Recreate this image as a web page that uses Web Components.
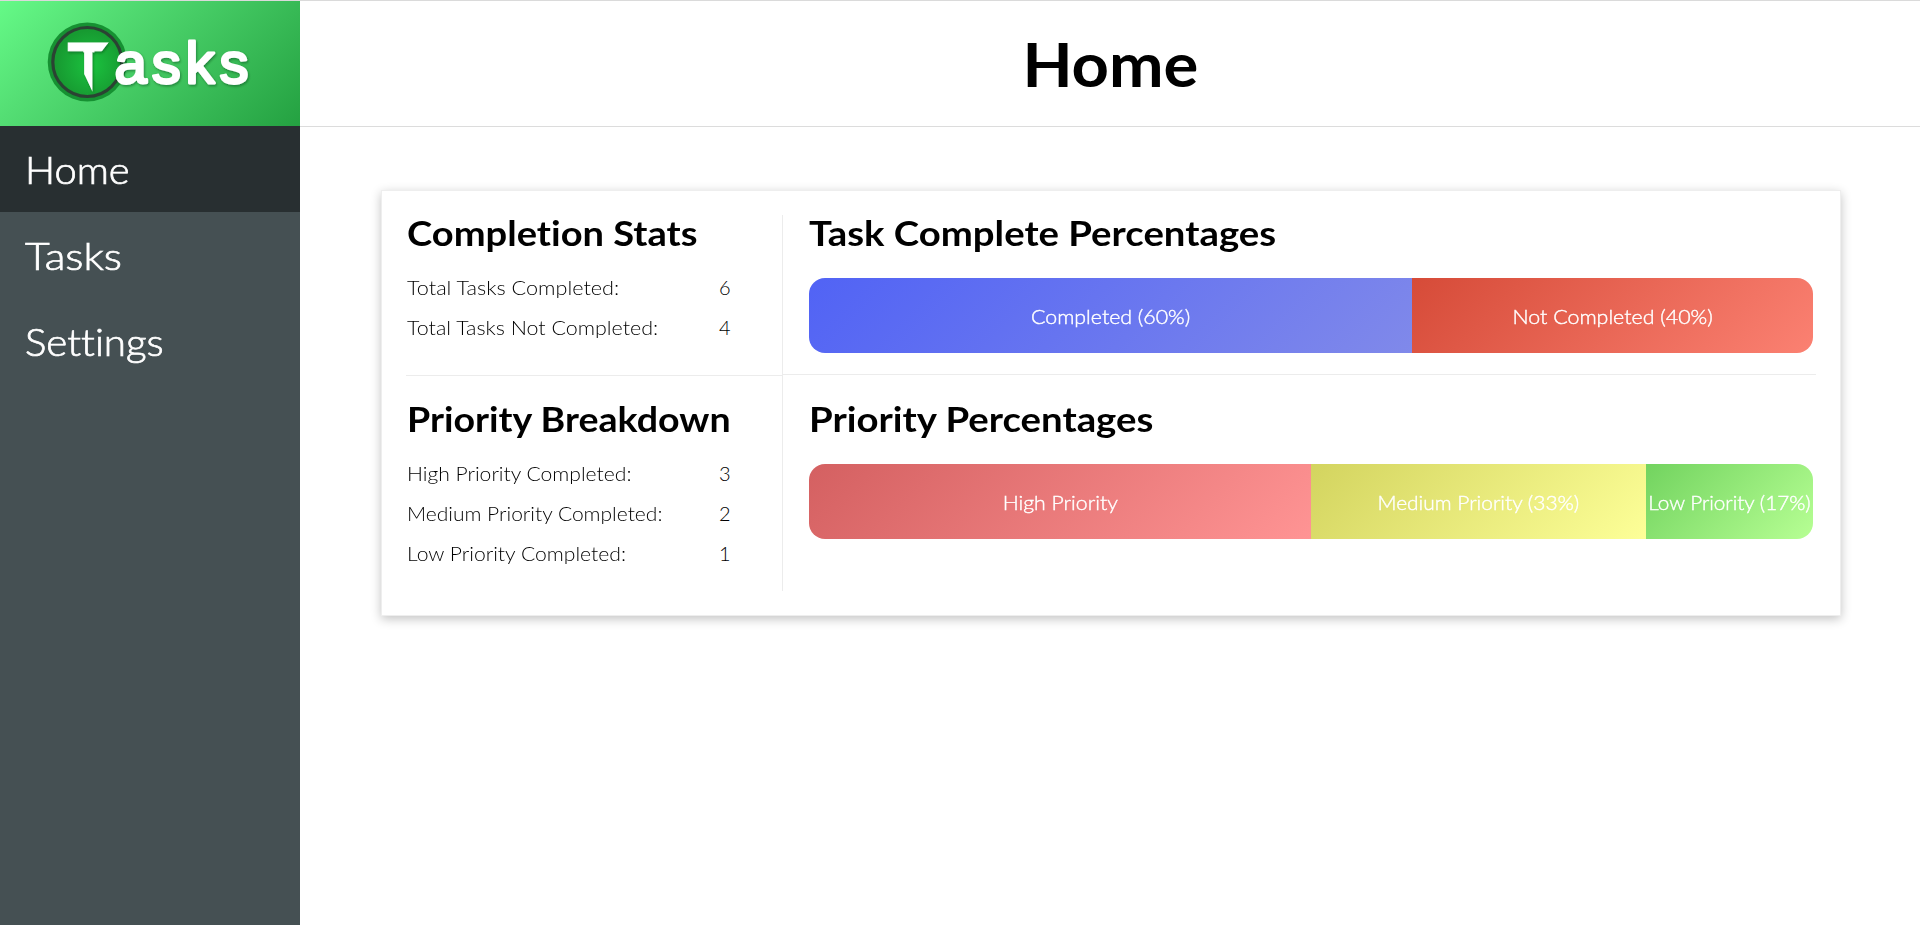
<!DOCTYPE html>
<html lang="en">
<head>
<meta charset="utf-8">
<title>Tasks</title>
<style>
  html, body { margin: 0; height: 100%; overflow: hidden; background: #fff; }
  body { font-family: Lato, "Open Sans", sans-serif; font-variant-ligatures: none; color: #000; }
</style>
</head>
<body>
<tasks-app></tasks-app>
<script>
const define = (name, html, setup) => customElements.define(name, class extends HTMLElement {
  connectedCallback() {
    if (this.shadowRoot) return;
    const t = document.createElement('template');
    t.innerHTML = html;
    this.attachShadow({ mode: 'open' }).append(t.content.cloneNode(true));
    if (setup) setup(this, this.shadowRoot);
  }
});

/* A single line of text, stretched horizontally to the ink width in "ink". */
const pen = document.createElement('canvas').getContext('2d');
define('wide-text', `
  <style>
    :host { display: inline-block; white-space: nowrap; transform-origin: var(--origin, left) center; }
  </style><slot></slot>`, host => {
  const cs = getComputedStyle(host);
  pen.font = `${cs.fontWeight} ${cs.fontSize} ${cs.fontFamily}`;
  const m = pen.measureText(host.textContent);
  const ink = m.actualBoundingBoxLeft + m.actualBoundingBoxRight;
  host.style.transform = `scaleX(${(host.getAttribute('ink') / ink).toFixed(4)})`;
});

define('tasks-logo', `
  <style>
    :host { display: block; height: 125px; background: linear-gradient(135deg, #65fa87 0%, #54de74 28%, #24a141 100%); }
    svg { display: block; }
  </style>
  <svg width="300" height="125" viewBox="0 1 300 125">
    <defs>
      <radialGradient id="disc" cx=".55" cy=".54" r=".5">
        <stop offset="0" stop-color="#1bc33f"/><stop offset="1" stop-color="#179a31"/>
      </radialGradient>
      <clipPath id="cut"><path d="M60 40H110.500L101 52.300H92.400V91.500L84.200 74V52.300H60Z"/></clipPath>
      <filter id="soft" x="-20%" y="-20%" width="140%" height="150%">
        <feDropShadow dx="1" dy="1.500" stdDeviation="1.200" flood-color="#063d14" flood-opacity=".45"/>
      </filter>
    </defs>
    <circle cx="87.300" cy="62" r="39.600" fill="#169132"/>
    <circle cx="87.300" cy="62" r="34.500" fill="url(#disc)" stroke="#2b4233" stroke-width="3.200"/>
    <g filter="url(#soft)" fill="#fff" font-family="Liberation Sans, Arial, sans-serif">
      <g clip-path="url(#cut)"><text x="67.500" y="91.500" font-size="70" font-weight="700" stroke="#fff" stroke-width="1">T</text></g>
      <text x="114.500" y="83" font-size="58" textLength="134" lengthAdjust="spacing" stroke="#fff" stroke-width="2.800" stroke-linejoin="round">asks</text>
    </g>
  </svg>`);

define('nav-item', `
  <style>
    :host { display: flex; align-items: center; height: 86px; box-sizing: border-box; padding: 1px 25px 0; font-size: 37px; font-weight: 300; color: #fff; -webkit-text-stroke: .7px #fff; }
    :host([active]) { background: #282f31; }
  </style><slot></slot>`);

define('side-bar', `
  <style>
    :host { display: block; background: #455053; }
  </style>
  <tasks-logo></tasks-logo>
  <nav>
    <nav-item active><wide-text ink="100">Home</wide-text></nav-item>
    <nav-item><wide-text ink="95">Tasks</wide-text></nav-item>
    <nav-item><wide-text ink="135">Settings</wide-text></nav-item>
  </nav>`);

define('page-header', `
  <style>
    :host { display: flex; height: 126px; box-sizing: border-box; align-items: center; justify-content: center; border-bottom: 1px solid #dcdcdc; --origin: center; }
    h1 { margin: 0; font-size: 61px; line-height: 74px; font-weight: 700; }
  </style>
  <h1><slot></slot></h1>`);

define('stat-row', `
  <style>
    :host { display: grid; grid-template-columns: 312px auto; height: 40px; line-height: 40px; font-size: 20px; font-weight: 300; }
  </style>
  <span><slot></slot></span><span><slot name="value"></slot></span>`);

define('stat-panel', `
  <style>
    :host { display: block; box-sizing: border-box; }
    h2 { margin: 0; height: 52px; font-size: 34px; line-height: 36px; font-weight: 700; }
  </style>
  <h2><slot name="title"></slot></h2><slot></slot>`);

define('bar-part', `
  <style>
    :host { display: flex; align-items: center; justify-content: center; min-width: 0; color: #fff; font-size: 20px; font-weight: 300; -webkit-text-stroke: .4px #fff; --origin: center; }
  </style><slot></slot>`, host => {
  host.style.flex = `${host.getAttribute('share')} 0 0`;
  host.style.background = `linear-gradient(135deg, ${host.getAttribute('from')}, ${host.getAttribute('to')})`;
});

define('ratio-bar', `
  <style>
    :host { display: flex; width: 1004px; height: 75px; border-radius: 16px; overflow: hidden; }
  </style><slot></slot>`);

define('stats-card', `
  <style>
    :host { display: grid; grid-template-columns: 377px 1fr; box-sizing: border-box; width: 1460px; height: 426px; padding: 24px; background: #fff;
      border: 1px solid #eee; box-shadow: 0 3px 10px rgba(0,0,0,.24); }
    .left { border-right: 1px solid #ececec; }
    stat-panel { padding: 0 0 0 1px; }
    .left stat-panel:first-child { height: 161px; border-bottom: 1px solid #ececec; }
    .right stat-panel { padding-left: 26px; }
    .right stat-panel:first-child { height: 160px; border-bottom: 1px solid #ececec; }
    .left stat-panel + stat-panel { padding-top: 25px; }
    .right stat-panel + stat-panel { padding-top: 26px; }
    ratio-bar { margin-top: 11px; }
  </style>
  <div class="left">
    <stat-panel>
      <wide-text slot="title" ink="289">Completion Stats</wide-text>
      <stat-row><wide-text ink="212">Total Tasks Completed:</wide-text><span slot="value">6</span></stat-row>
      <stat-row><wide-text ink="251">Total Tasks Not Completed:</wide-text><span slot="value">4</span></stat-row>
    </stat-panel>
    <stat-panel>
      <wide-text slot="title" ink="321">Priority Breakdown</wide-text>
      <stat-row><wide-text ink="222">High Priority Completed:</wide-text><span slot="value">3</span></stat-row>
      <stat-row><wide-text ink="253">Medium Priority Completed:</wide-text><span slot="value">2</span></stat-row>
      <stat-row><wide-text ink="217">Low Priority Completed:</wide-text><span slot="value">1</span></stat-row>
    </stat-panel>
  </div>
  <div class="right">
    <stat-panel>
      <wide-text slot="title" ink="466">Task Complete Percentages</wide-text>
      <ratio-bar>
        <bar-part share="60.06" from="#5163f5" to="#8089ea"><wide-text ink="158">Completed (60%)</wide-text></bar-part>
        <bar-part share="39.94" from="#d64b38" to="#fb8172"><wide-text ink="198">Not Completed (40%)</wide-text></bar-part>
      </ratio-bar>
    </stat-panel>
    <stat-panel>
      <wide-text slot="title" ink="342">Priority Percentages</wide-text>
      <ratio-bar>
        <bar-part share="6" from="#d46061" to="#ff9494"><wide-text ink="113">High Priority</wide-text></bar-part>
        <bar-part share="4" from="#d3d45f" to="#fdff98"><wide-text ink="200">Medium Priority (33%)</wide-text></bar-part>
        <bar-part share="2" from="#72d35f" to="#b7ff94"><wide-text ink="161">Low Priority (17%)</wide-text></bar-part>
      </ratio-bar>
    </stat-panel>
  </div>`);

define('tasks-app', `
  <style>
    :host { display: grid; grid-template-columns: 300px 1fr; height: 925px; box-sizing: border-box; border-top: 1px solid #dadada; }
    stats-card { margin: 63px 0 0 81px; }
  </style>
  <side-bar></side-bar>
  <main>
    <page-header><wide-text ink="170">Home</wide-text></page-header>
    <stats-card></stats-card>
  </main>`);
</script>
</body>
</html>
